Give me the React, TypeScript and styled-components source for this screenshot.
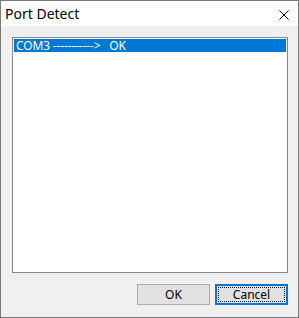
import React from "react";
import styled, { createGlobalStyle } from "styled-components";

const Global = createGlobalStyle`
  html, body { margin: 0; padding: 0; background: #ffffff; }
  * { box-sizing: border-box; }
`;

const Window = styled.div`
  width: 299px;
  height: 318px;
  border: 1px solid #7a7a7a;
  background: #f0f0f0;
  display: flex;
  flex-direction: column;
  font-family: "Noto Sans", "Liberation Sans", sans-serif;
  font-size: 12px;
  color: #000;
`;

const TitleBar = styled.div`
  height: 25px;
  background: #ffffff;
  display: flex;
  align-items: center;
  justify-content: space-between;
  padding-left: 4px;
  padding-right: 9px;
  flex-shrink: 0;
`;

const Title = styled.span`
  font-size: 14px;
  line-height: 16px;
  margin-top: 1px;
`;

const CloseButton = styled.div`
  width: 10px;
  height: 10px;
  display: flex;
  margin-top: 2px;
`;

const Body = styled.div`
  flex: 1;
  display: flex;
  flex-direction: column;
  padding: 11px 10px 12px 11px;
`;

const ListBox = styled.div`
  height: 236px;
  background: #ffffff;
  border: 1px solid #828790;
  padding: 1px;
  display: flex;
  flex-direction: column;
`;

const ListItem = styled.div<{ $selected?: boolean }>`
  height: 13px;
  line-height: 13px;
  padding-left: 2px;
  white-space: pre;
  background: ${(p) => (p.$selected ? "#0078d7" : "transparent")};
  color: ${(p) => (p.$selected ? "#ffffff" : "#000000")};
  font-size: 12px;
  letter-spacing: -0.15px;
`;

const ButtonRow = styled.div`
  margin-top: 11px;
  display: flex;
  justify-content: flex-end;
  gap: 5px;
`;

const Button = styled.button<{ $default?: boolean }>`
  width: 73px;
  height: 21px;
  padding: 0;
  margin: 0;
  background: #e1e1e1;
  border: ${(p) => (p.$default ? "2px solid #0078d7" : "1px solid #adadad")};
  font-family: "Noto Sans", "Liberation Sans", sans-serif;
  font-size: 12px;
  color: #000;
  display: flex;
  align-items: center;
  justify-content: center;
  position: relative;
`;

const FocusRect = styled.span`
  position: absolute;
  inset: 1px;
  border: 1px dotted #000;
`;

export default function App() {
  return (
    <>
      <Global />
      <Window>
        <TitleBar>
          <Title>Port Detect</Title>
          <CloseButton>
            <svg width="10" height="10" viewBox="0 0 10 10">
              <path d="M0.5 0.5 L9.5 9.5 M9.5 0.5 L0.5 9.5" stroke="#000" strokeWidth="1" />
            </svg>
          </CloseButton>
        </TitleBar>
        <Body>
          <ListBox>
            <ListItem $selected>{"COM3 ----------->   OK"}</ListItem>
          </ListBox>
          <ButtonRow>
            <Button>OK</Button>
            <Button $default>
              <FocusRect />
              Cancel
            </Button>
          </ButtonRow>
        </Body>
      </Window>
    </>
  );
}
